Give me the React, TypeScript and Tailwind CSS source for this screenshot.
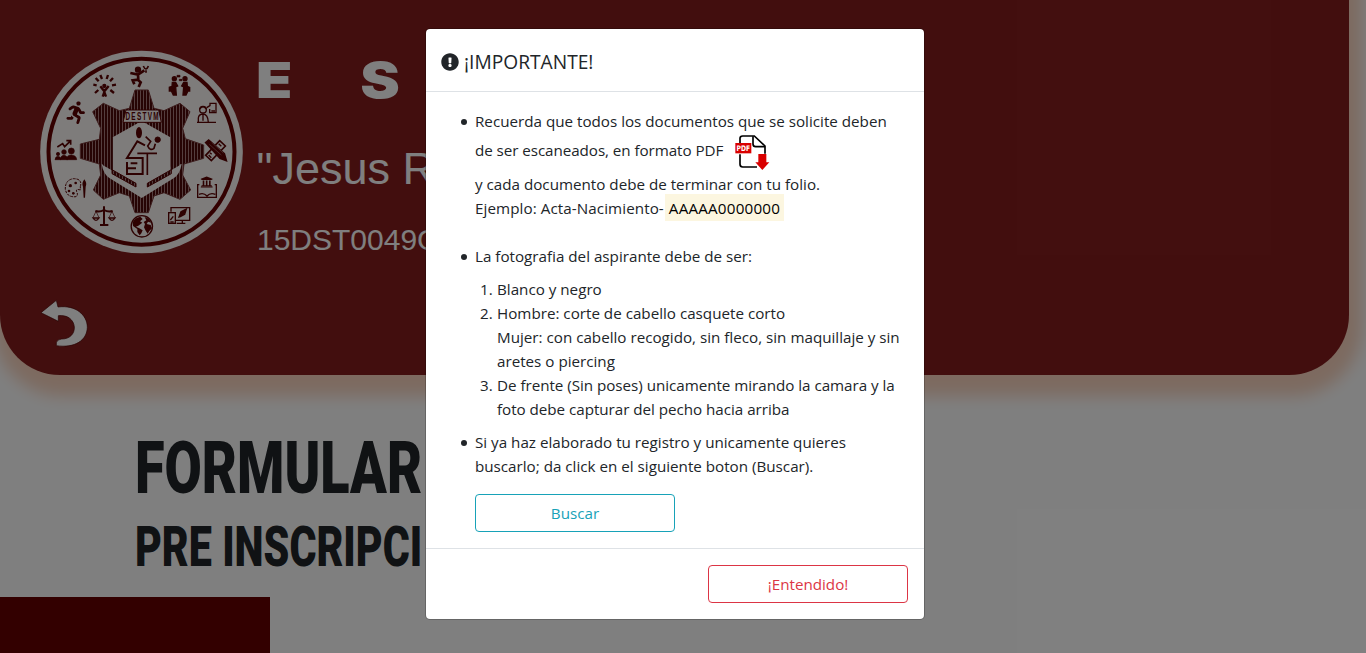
import React from "react";
import { FaRunning, FaExclamationCircle, FaUniversity } from "react-icons/fa";

const INK = "#5c0303";
const PAPER = "#fcf8f6";

const GEAR =
  "M315 150H355L372 205L402 212L450 190L480 215L458 265L466 296L521 315V355L462 372L458 405L482 450L450 478L402 458L372 468L355 518H315L298 468L268 458L220 478L190 450L212 405L208 372L151 355V312L208 298L212 265L188 215L220 190L268 212L298 205Z";

function Seal() {
  return (
    <svg viewBox="0 0 675 675" className="block size-[225px] shrink-0" color={INK}>
      <defs>
        <pattern id="stripes" width="9" height="9" patternUnits="userSpaceOnUse">
          <rect width="9" height="9" fill="#a87c7c" />
          <rect width="6" height="9" fill="#4d0808" />
        </pattern>
      </defs>
      <circle cx="334.500" cy="336" r="304" fill={PAPER} />
      <circle cx="334.500" cy="335" r="279" fill="none" stroke="#660000" strokeWidth="12" />
      <path d={GEAR} fill="url(#stripes)" stroke="#7a3a3a" strokeWidth="3" />
      <path
        d="M335 243L421 292V380L455 372Q450 402 432 414L335 474L238 414Q220 402 215 372L248 390V292Z"
        fill={PAPER}
      />
      <path d="M421 292V392L449 376V290Z M248 292V392L219 376V290Z" fill="url(#stripes)" />
      <path d="M246 389L318 430V441L246 401Z M424 389L352 430V441L424 401Z" fill="url(#stripes)" stroke={INK} strokeWidth="3" />
      <path d="M288 210H386L394 247H279Z" fill={PAPER} stroke={INK} strokeWidth="3" />
      <g transform="translate(336 240) scale(0.6 1)">
        <text textAnchor="middle" textLength="166" lengthAdjust="spacing" fontSize="32" fontWeight="700" fontFamily="Liberation Sans, sans-serif" fill={INK}>
          DESTVM
        </text>
      </g>
      {/* student at desk */}
      <ellipse cx="327" cy="278" rx="9" ry="17" fill={INK} />
      <g fill="none" stroke={INK} strokeWidth="6">
        <path d="M345 316L322 304L291 354H338V402H291V366M291 385H318M302 370H322" />
        <path d="M322 340H381M352 340V405M347 290L362 304L353 318Q360 334 372 325L376 311" strokeWidth="5" />
        <circle cx="383" cy="299" r="8" fill={INK} strokeWidth="3" />
      </g>
      {/* champion */}
      <g fill="none" stroke={INK} strokeWidth="7">
        <circle cx="324" cy="89" r="6" fill={INK} />
        <path d="M301 99L324 104L343 91M324 104L325 121M325 119L308 121L313 133M325 121L332 127L326 141" strokeWidth="8" />
        <path d="M340 78Q348 96 355 78M348 91V98" strokeWidth="5" />
      </g>
      {/* celebration */}
      <g fill="none" stroke={INK} strokeWidth="5">
        <path d="M211 139L223 154L236 138M223 150V168M218 170L223 156L228 170" strokeWidth="7" />
        <circle cx="223" cy="138" r="4" fill={INK} />
        <path d="M190 134L200 136M197 114L206 124M211 105L216 117M234 105L230 117M249 114L240 124M258 134L246 136M195 159L205 150M252 159L241 150" strokeWidth="7" />
      </g>
      {/* debate */}
      <g fill={INK} stroke={INK} strokeWidth="4">
        <circle cx="433" cy="116" r="6" />
        <circle cx="465" cy="116" r="6" />
        <path d="M427 127L437 127L443 138L437 141L439 165H430L424 153H418V142L426 139Z M471 127L461 127L455 138L461 141L459 165H468L474 153H479V142L472 139Z" />
        <path d="M441 106H450V111H441ZM448 118H456V122H448Z" strokeWidth="2" />
      </g>
      {/* teacher */}
      <g fill="none" stroke={INK} strokeWidth="4">
        <circle cx="519" cy="209" r="10" />
        <path d="M509 207Q519 194 529 207M505 247V234Q506 223 519 222Q534 223 535 247M501 247H558M519 225V242M530 203L540 197V190H558V218H539V207M544 213H555" />
      </g>
      <FaRunning x={103} y={184} size={68} />
      {/* pencil and ruler */}
      <g stroke={INK} strokeWidth="5">
        <path d="M569 302L586 318L544 362L527 346Z" fill={PAPER} />
        <path d="M566 311L574 319M558 320L563 325M540 338L545 343M536 345L544 353" strokeWidth="4" />
        <path d="M527 308L536 300L583 341L589 362L570 355Z" fill={INK} />
        <path d="M538 313L574 345M545 307L580 339" stroke="#a87c7c" strokeWidth="2" />
      </g>
      {/* growth */}
      <g fill={INK} stroke={INK} strokeWidth="2">
        <circle cx="84" cy="342" r="5" />
        <circle cx="102" cy="336" r="7" />
        <circle cx="124" cy="333" r="9" />
        <path d="M75 359Q76 349 85 349Q92 350 93 359Z M91 359Q92 346 103 346Q112 347 113 359Z M110 359Q110 345 124 345Q139 346 140 359Z" />
      </g>
      <path d="M82 321L98 311L104 320L120 304M109 302H122V314" fill="none" stroke={INK} strokeWidth="5" />
      {/* palette */}
      <path d="M151 440Q158 416 130 416Q105 420 106 448Q111 473 138 470Q146 465 139 453Q139 446 151 450Z" fill="none" stroke={INK} strokeWidth="3" strokeDasharray="8 3" />
      <g fill={INK}>
        <circle cx="121" cy="437" r="5" />
        <circle cx="137" cy="429" r="4" />
        <circle cx="117" cy="453" r="4" />
        <circle cx="130" cy="460" r="4" />
        <path d="M159 440Q154 430 163 418Q172 430 167 440L165 473H161Z" />
      </g>
      {/* justice */}
      <g fill="none" stroke={INK} strokeWidth="4">
        <path d="M222 499V552M196 513Q210 517 222 510Q234 517 248 513M210 555H235" strokeWidth="6" />
        <path d="M198 514L189 533M198 514L207 533M246 514L237 533M246 514L255 533" strokeWidth="2" />
        <path d="M189 534Q198 548 207 534ZM237 534Q246 548 255 534Z" />
      </g>
      {/* globe */}
      <circle cx="335.500" cy="559" r="32" fill="none" stroke={INK} strokeWidth="4" />
      <path
        d="M309 545Q315 533 331 530L338 537L330 544L337 548L325 557L318 560L328 565L338 571L334 580L329 586L322 576V567L309 558ZM344 531Q358 535 364 548L354 545L350 552L362 555L366 565L358 573L353 581L347 572L342 562L345 552L341 546L349 541Z"
        fill={INK}
      />
      <FaUniversity x={511} y={407} size={38} />
      <path d="M508 434H503V472H559V434H554M507 463Q521 457 531 468Q541 457 556 463" fill="none" stroke={INK} strokeWidth="4" />
      {/* technology */}
      <g fill="none" stroke={INK} strokeWidth="4">
        <path d="M423 515V503H479V541H438M457 541V550M440 550H466" />
        <rect x="416" y="518" width="20" height="32" />
        <path d="M447 531L453 515L469 507L464 523L451 530Z" fill={INK} />
        <path d="M421 540L430 529M421 546H431" />
      </g>
    </svg>
  );
}

function BackArrow() {
  return (
    <svg viewBox="110 50 165 165" className="block size-[55px]">
      <path
        d="M122 97L168 60L173 80C226 73 261 104 261 141C260 180 224 204 168 196V187Q170 177 184 176C209 176 223 160 222 140C220 118 202 103 174 106V123Z"
        fill="#fff"
        stroke="#4a0000"
        strokeWidth="2"
      />
    </svg>
  );
}

function PdfIcon() {
  return (
    <svg viewBox="0 0 105 108" className="ml-[12px] block h-[36px] w-[35px]">
      <path d="M15 25V10Q15 3 23 3H58L90 33V56M15 58V88Q15 96 23 96H66" fill="none" stroke="#000" strokeWidth="5" />
      <path d="M54 4V27Q54 35 62 35H90" fill="none" stroke="#000" strokeWidth="5" />
      <rect x="1" y="24" width="48" height="31" fill="#d90000" />
      <text x="25" y="48" textAnchor="middle" textLength="41" lengthAdjust="spacingAndGlyphs" fontSize="23" fontWeight="700" fontFamily="DejaVu Sans, sans-serif" fill="#fff">
        PDF
      </text>
      <path d="M70 57H94V82H103L82 105L61 82H70Z" fill="#d90000" />
    </svg>
  );
}

function Bullet({ children }: { children: React.ReactNode }) {
  return (
    <li className="flex">
      <span className="mt-[10px] mr-[8.500px] ml-[20px] size-[5.5px] shrink-0 rounded-full bg-[#212529]" />
      <div className="flex-1">{children}</div>
    </li>
  );
}

function Step({ n, children }: { n: number; children: React.ReactNode }) {
  return (
    <li className="flex">
      <span className="w-[22px] shrink-0 pl-[5px]">{n}.</span>
      <div>{children}</div>
    </li>
  );
}

export default function App() {
  return (
    <div className="relative flow-root h-[653px] w-full overflow-hidden bg-white text-[#212529]">
      <header className="-mt-[20px] flex h-[395px] w-[1349px] flex-col rounded-b-[60px] bg-[#851d1d] pt-[60px] shadow-[3px_11px_16px_10px_#fad5c0]">
        <div className="flex pl-[30px]">
          <Seal />
          <div className="flex flex-col whitespace-nowrap text-white">
            <p className="mt-[10px] ml-[1px] h-[60px] origin-left scale-x-[1.2] font-['Inter'] text-[49.5px] leading-[60px] font-black tracking-[56.5px]">ES</p>
            <p className="mt-[33px] ml-[1.5px] h-[52px] font-['Liberation_Sans'] text-[45px] leading-[52px]">"Jesus R</p>
            <p className="mt-[27px] ml-[2px] h-[36px] font-['Liberation_Sans'] text-[30px] leading-[36px]">15DST0049G</p>
          </div>
        </div>
        <div className="mt-[32px] ml-[37px]">
          <BackArrow />
        </div>
      </header>
      <main className="flex flex-col">
        <h1 className="mt-[50px] ml-[135px] h-[86px] w-[500px] origin-left scale-x-[0.74] font-['Roboto'] text-[73px] leading-[86px] font-black whitespace-nowrap">FORMULAR</h1>
        <h2 className="mt-[4px] ml-[135px] h-[64px] w-[500px] origin-left scale-x-[0.75] font-['Roboto'] text-[55px] leading-[64px] font-black whitespace-nowrap">PRE INSCRIPCI</h2>
        <div className="mt-[18px] h-[80px] w-[270px] shrink-0 bg-[#660000]" />
      </main>

      <div className="absolute inset-0 flex items-start bg-black/50 pt-[28px] pl-[425px]">
        <section className="w-[500px] rounded-[5px] border border-black/20 bg-white bg-clip-padding font-['Open_Sans'] text-[15.2px] leading-[24px]">
          <div className="flex h-[63px] items-center gap-[5px] border-b border-[#dee2e6] pt-[3px] pl-[15px]">
            <FaExclamationCircle size={18} />
            <h5 className="text-[19.2px] leading-[30px]">¡IMPORTANTE!</h5>
          </div>
          <ul className="h-[456px] pt-[17px] pl-[15px]">
            <Bullet>
              <p>Recuerda que todos los documentos que se solicite deben</p>
              <div className="flex h-[39px] items-start">
                <span className="pt-[5px] tracking-[-0.06px]">de ser escaneados, en formato PDF</span>
                <div className="pt-[2px]">
                  <PdfIcon />
                </div>
              </div>
              <p>y cada documento debe de terminar con tu folio.</p>
              <div className="flex h-[24px]">
                <span className="tracking-[0.08px]">Ejemplo: Acta-Nacimiento-</span>
                <span className="-mt-[2px] ml-[1px] h-[27px] bg-[#fcf6e0] px-[4px] pt-[2px] tracking-[0.2px] text-black">AAAAA0000000</span>
              </div>
            </Bullet>
            <li className="h-[24px]" />
            <Bullet>
              <p>La fotografia del aspirante debe de ser:</p>
              <ol className="pt-[9px] pb-[9px]">
                <Step n={1}>Blanco y negro</Step>
                <Step n={2}>
                  <p>Hombre: corte de cabello casquete corto</p>
                  <p>Mujer: con cabello recogido, sin fleco, sin maquillaje y sin</p>
                  <p>aretes o piercing</p>
                </Step>
                <Step n={3}>
                  <p className="tracking-[-0.03px]">De frente (Sin poses) unicamente mirando la camara y la</p>
                  <p className="tracking-[-0.03px]">foto debe capturar del pecho hacia arriba</p>
                </Step>
              </ol>
            </Bullet>
            <Bullet>
              <p>Si ya haz elaborado tu registro y unicamente quieres</p>
              <p>buscarlo; da click en el siguiente boton (Buscar).</p>
              <button className="mt-[16px] block h-[38px] w-[200px] rounded-[4px] border border-[#17a2b8] text-[#17a2b8]">Buscar</button>
            </Bullet>
          </ul>
          <div className="flex h-[71px] justify-end border-t border-[#dee2e6] pt-[16px] pr-[16px]">
            <button className="h-[38px] w-[200px] rounded-[4px] border border-[#dc3545] text-[#dc3545]">¡Entendido!</button>
          </div>
        </section>
      </div>
    </div>
  );
}
